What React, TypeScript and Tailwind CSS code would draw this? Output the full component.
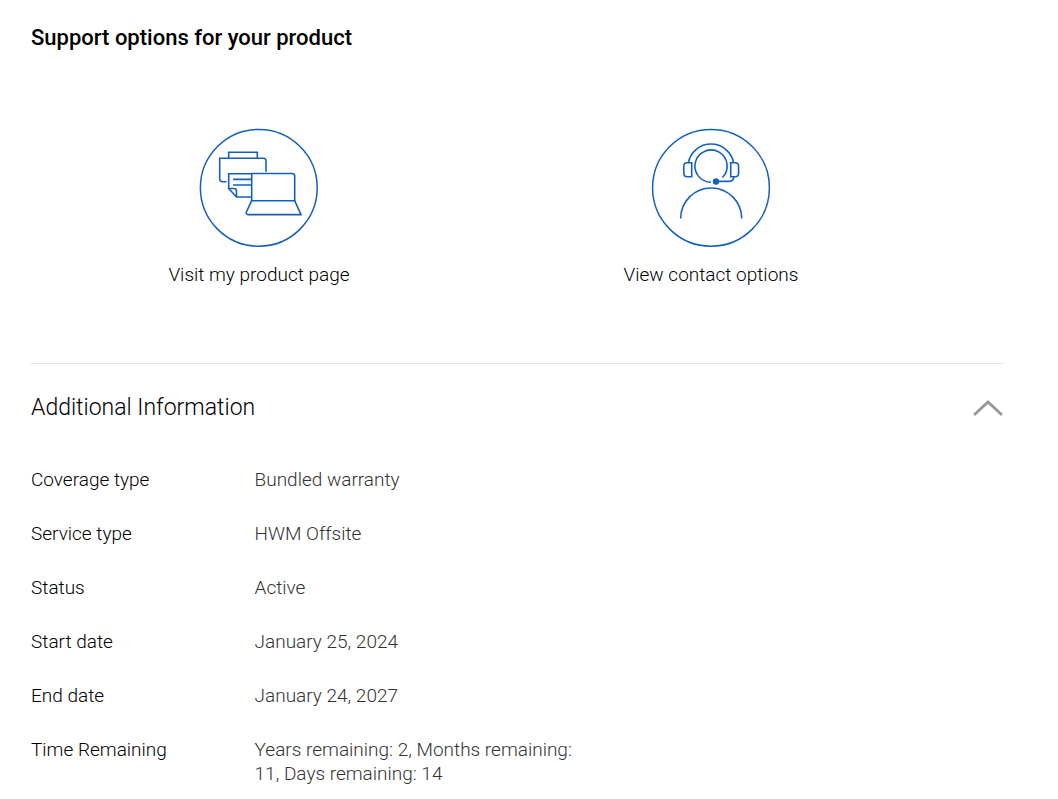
import { useState } from 'react';

const details = [
  { label: 'Coverage type', value: 'Bundled warranty' },
  { label: 'Service type', value: 'HWM Offsite' },
  { label: 'Status', value: 'Active' },
  { label: 'Start date', value: 'January 25, 2024' },
  { label: 'End date', value: 'January 24, 2027' },
  { label: 'Time Remaining', value: 'Years remaining: 2, Months remaining: 11, Days remaining: 14' },
];

function ProductIcon() {
  return (
    <svg width="120" height="120" viewBox="0 0 120 120" fill="none" stroke="#1560bd" strokeWidth="1.6" aria-hidden="true">
      <circle cx="59.8" cy="59.8" r="58.4" strokeWidth="1.5" />
      {/* Printer */}
      <path d="M29.7 30.3V24.3H58.3V30.3" />
      <path d="M27.5 53.7H23.7Q20.7 53.7 20.7 50.7V30.3H64.5Q67 30.3 67 33.3V43.7" />
      <path d="M52.7 45.7H29.7V60.5L37.5 69H52.7M29.7 60.5H35Q37.5 60.5 37.5 63V69" />
      <path d="M34 51.4H52.7M34 57H52.7" />
      {/* Laptop */}
      <path d="M52.7 72.7V45.5H93.2Q95.7 45.5 95.7 48V72.7Z" />
      <path d="M52.7 72.7L47.4 84Q46.8 86.6 49 86.6H102L95.7 72.7" />
    </svg>
  );
}

function ContactIcon() {
  return (
    <svg width="120" height="120" viewBox="0 0 120 120" fill="none" stroke="#1560bd" strokeWidth="1.6" aria-hidden="true">
      <circle cx="60" cy="59.8" r="58.4" strokeWidth="1.5" />
      {/* Headset */}
      <path d="M37.4 34.7A23 23 0 0 1 82.6 34.7" />
      <path d="M40.7 34.7H36.2Q32.8 34.7 32.8 38.2V45.3Q32.8 48.7 36.2 48.7H40.7Z" />
      <path d="M79.7 34.7H84.2Q87.6 34.7 87.6 38.2V45.3Q87.6 48.7 84.2 48.7H79.7Z" />
      <path d="M82.8 48.7Q82.8 53.4 77.3 53.4H65" />
      <circle cx="65" cy="53.5" r="3.2" fill="#1560bd" stroke="none" />
      {/* Head and shoulders */}
      <path d="M60 54.2A16.1 16.1 0 1 1 71.4 49.5" />
      <path d="M29.7 90.5A30.5 30.5 0 1 1 90.7 90.5" />
    </svg>
  );
}

export default function App() {
  const [open, setOpen] = useState(true);

  return (
    <main className="min-h-screen bg-white pl-[31px] pr-[55px] pt-6 font-[Roboto,sans-serif] font-light text-black">
      <h1 className="text-[22px] leading-7 font-medium">Support options for your product</h1>

      {/* Support links */}
      <div className="mt-[76px] ml-0.5 grid w-[93%] grid-cols-2 text-[19px] leading-6">
        <a href="#product" className="flex flex-col items-center gap-[15px]">
          <ProductIcon />
          <span>Visit my product page</span>
        </a>
        <a href="#contact" className="flex flex-col items-center gap-[15px]">
          <ContactIcon />
          <span>View contact options</span>
        </a>
      </div>

      {/* Warranty details */}
      <section className="mt-[76px] border-t border-[#e5e5e5] pt-7">
        <h2>
          <button
            type="button"
            aria-expanded={open}
            aria-controls="details"
            onClick={() => setOpen(!open)}
            className="flex w-full cursor-pointer items-center justify-between text-left text-[23px] leading-8"
          >
            Additional Information
            <svg
              width="30"
              height="18"
              viewBox="0 0 30 18"
              fill="none"
              stroke="#999"
              strokeWidth="3"
              className={open ? '' : 'rotate-180'}
              aria-hidden="true"
            >
              <path d="M1 16L15 3L29 16" />
            </svg>
          </button>
        </h2>
        {open && (
          <dl id="details" className="mt-11 flex flex-col gap-[30px] text-[19px] leading-6">
            {details.map((item) => (
              <div key={item.label} className="flex">
                <dt className="w-[23%] shrink-0">{item.label}</dt>
                <dd className="w-[34%] text-[#333]">{item.value}</dd>
              </div>
            ))}
          </dl>
        )}
      </section>
    </main>
  );
}
